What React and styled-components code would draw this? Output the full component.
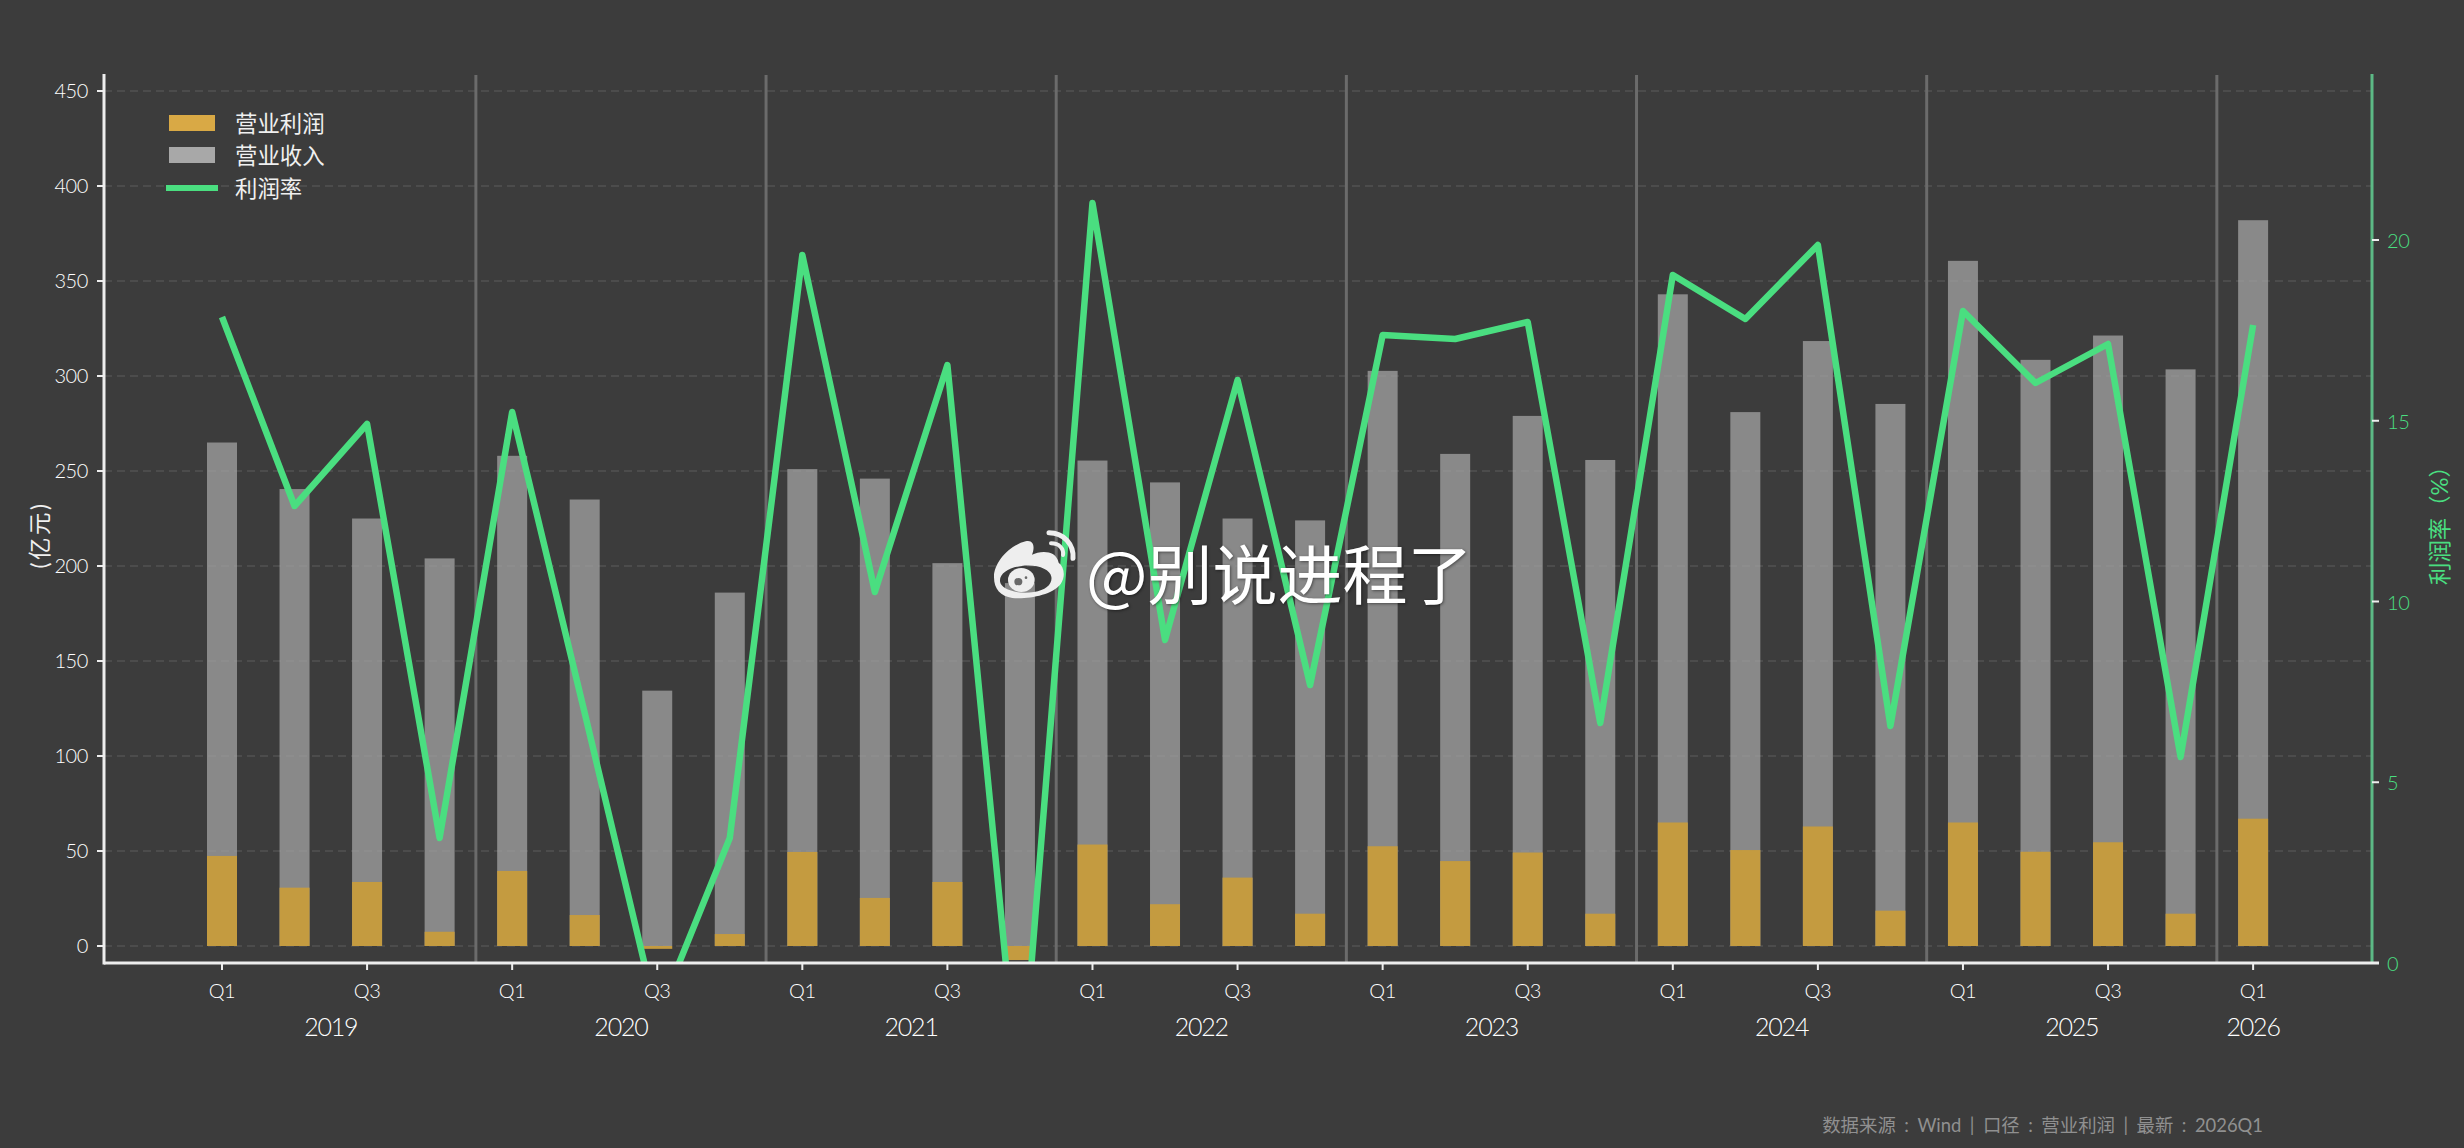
import React from "react";
import styled, { createGlobalStyle } from "styled-components";

const GlobalStyle = createGlobalStyle`
  html, body { margin: 0; padding: 0; background: #3c3c3c; overflow: hidden; }
  #root { width: 2464px; height: 1148px; }
`;

const FONT = `"Lato", "Noto Sans CJK SC", sans-serif`;

const Page = styled.main`
  width: 2464px;
  height: 1148px;
  display: flex;
  flex-direction: column;
  background: #3c3c3c;
  font-family: ${FONT};
`;
const ChartArea = styled.section`
  position: relative;
  flex: 1;
`;
const ChartSvg = styled.svg`
  display: block;
  width: 2464px;
  height: 1100px;
`;
const Footer = styled.footer`
  height: 48px;
  display: flex;
  align-items: center;
  justify-content: flex-end;
  padding-right: 201px;
  color: #909090;
  font-size: 18.4px;
  font-weight: 400;
  word-spacing: 3.8px;
  white-space: pre;
`;
const Legend = styled.div`
  position: absolute;
  left: 166px;
  top: 107px;
  display: flex;
  flex-direction: column;
  color: #f0f0f0;
  font-size: 22.4px;
  font-weight: 400;
`;
const LegendRow = styled.div`
  height: 32px;
  line-height: 32px;
  display: flex;
  align-items: center;
  gap: 17px;
  &:last-child {
    margin-top: 1px;
  }
`;
const LegendText = styled.span`
  padding-top: 2px;
`;
const SwatchBox = styled.span`
  width: 52px;
  display: flex;
  justify-content: center;
`;
const BarSwatch = styled.span`
  width: 46px;
  height: 16px;
  background: ${(p) => p.$color};
`;
const LineSwatch = styled.span`
  width: 52px;
  height: 6px;
  background: #4ade80;
`;
const Watermark = styled.div`
  position: absolute;
  left: 992px;
  top: 529px;
  display: flex;
  align-items: center;
  gap: 7px;
  color: #fff;
  font-family: "Noto Sans CJK SC", sans-serif;
  font-size: 65px;
  line-height: 85px;
  text-shadow: 1px 1px 3px rgba(0, 0, 0, 0.45);
  white-space: nowrap;
`;
const LogoSvg = styled.svg`
  width: 87px;
  height: 85px;
  flex: none;
`;
const TickLabel = styled.text`
  font-family: ${FONT};
  font-size: 20px;
  font-weight: 300;
  letter-spacing: -0.4px;
  fill: ${(p) => p.$color || "#ffffff"};
  text-anchor: ${(p) => p.$anchor || "middle"};
  dominant-baseline: central;
`;
const YearLabel = styled.text`
  font-family: ${FONT};
  font-size: 25px;
  font-weight: 300;
  letter-spacing: -1.2px;
  fill: #ffffff;
  text-anchor: middle;
  dominant-baseline: central;
`;
const AxisTitle = styled.text`
  font-family: ${FONT};
  font-size: 22.4px;
  font-weight: 400;
  letter-spacing: ${(p) => p.$spacing || "0"};
  fill: ${(p) => p.$color};
  text-anchor: middle;
  dominant-baseline: central;
`;
const GridLine = styled.line`
  stroke: #525252;
  stroke-width: 1.5;
  stroke-dasharray: 8 5;
`;
const YearDivider = styled.line`
  stroke: #6b6b6b;
  stroke-width: 3;
`;
const AxisLine = styled.line`
  stroke: ${(p) => p.$color || "#eeeeee"};
  stroke-width: ${(p) => p.$w || 3};
`;
const RevenueBar = styled.rect`
  fill: #aaaaaa;
  fill-opacity: 0.7;
`;
const ProfitBar = styled.rect`
  fill: #c49b40;
`;
const MarginLine = styled.polyline`
  fill: none;
  stroke: #4ade80;
  stroke-width: 6.5;
  stroke-linejoin: round;
  stroke-linecap: butt;
`;

const revenue = [265, 240.5, 225, 204, 258, 235, 134.4, 186, 251, 246, 201.5, 191, 255.5, 244, 225, 224, 302.7, 259, 279, 255.8, 343, 281, 318.4, 285.3, 360.6, 308.5, 321.3, 303.5, 382];
const profit = [47.4, 30.7, 33.7, 7.5, 39.5, 16.3, -1.5, 6.3, 49.5, 25.3, 33.7, -7.4, 53.4, 22, 36, 17, 52.5, 44.7, 49.2, 17, 65, 50.5, 62.9, 18.6, 65, 49.6, 54.6, 17, 67];
const marginY = [317, 506, 424, 838, 412, 713, 1017, 838, 255, 592, 365, 1108, 203, 640, 380, 685, 335, 339, 322, 723, 275, 319, 245, 726, 311, 383, 344, 757, 325];

const LEFT = 104, RIGHT = 2372, TOP = 74, BOTTOM = 963;
const qx = (i) => 222 + 72.54 * i;
const vy = (v) => 946 - 1.9 * v;
const ry = (v) => 963 - 36.15 * v;
const BAR = 30;

const leftTicks = [0, 50, 100, 150, 200, 250, 300, 350, 400, 450];
const rightTicks = [0, 5, 10, 15, 20];
const years = [2019, 2020, 2021, 2022, 2023, 2024, 2025];

function WeiboLogo() {
  return (
    <LogoSvg viewBox="24 25 261 255" aria-hidden="true">
      <path
        fillRule="evenodd"
        fill="#eeeeee"
        d="M30 170C28 130 70 76 125 62C152 56 152 84 144 102C168 90 216 86 224 126C240 138 246 166 230 190C204 224 132 236 85 232C50 228 30 205 30 170ZM48 182C50 206 100 222 150 214C186 208 206 190 202 168C198 146 160 130 112 136C76 140 46 158 48 182Z"
      />
      <ellipse cx="112" cy="178" rx="40" ry="36" fill="#eeeeee" />
      <ellipse cx="103" cy="183" rx="12" ry="11" fill="#6a6a6a" />
      <circle cx="126" cy="171" r="4" fill="#6a6a6a" />
      <path d="M195 36C240 36 270 72 267 113" fill="none" stroke="#eeeeee" strokeWidth="15" strokeLinecap="round" />
      <path d="M201 68C226 68 240 84 237 103" fill="none" stroke="#eeeeee" strokeWidth="12" strokeLinecap="round" />
    </LogoSvg>
  );
}

export default function App() {
  return (
    <Page>
      <GlobalStyle />
      <ChartArea>
        <ChartSvg viewBox="0 0 2464 1100">
          <defs>
            <clipPath id="plot">
              <rect x={LEFT} y={TOP} width={RIGHT - LEFT} height={BOTTOM - TOP} />
            </clipPath>
          </defs>

          {leftTicks.map((t) => (
            <GridLine key={t} x1={LEFT} x2={RIGHT} y1={vy(t)} y2={vy(t)} />
          ))}

          {revenue.map((v, i) => (
            <RevenueBar key={i} x={qx(i) - BAR / 2} y={vy(v)} width={BAR} height={vy(0) - vy(v)} />
          ))}
          {profit.map((v, i) => (
            <ProfitBar key={i} x={qx(i) - BAR / 2} y={Math.min(vy(v), vy(0))} width={BAR} height={Math.abs(vy(0) - vy(v))} />
          ))}

          {[3.5, 7.5, 11.5, 15.5, 19.5, 23.5, 27.5].map((p) => (
            <YearDivider key={p} x1={qx(p)} x2={qx(p)} y1={75} y2={BOTTOM} />
          ))}

          <g clipPath="url(#plot)">
            <MarginLine points={marginY.map((y, i) => `${qx(i)},${y}`).join(" ")} />
          </g>

          <AxisLine x1={LEFT} x2={LEFT} y1={TOP} y2={BOTTOM + 1.5} />
          <AxisLine $color="#5cb985" x1={RIGHT} x2={RIGHT} y1={TOP} y2={BOTTOM} />
          <AxisLine x1={LEFT} x2={RIGHT + 7} y1={BOTTOM} y2={BOTTOM} />

          {leftTicks.map((t) => (
            <g key={t}>
              <AxisLine $w={2} x1={97} x2={LEFT} y1={vy(t)} y2={vy(t)} />
              <TickLabel $anchor="end" x={88} y={vy(t) - 1}>{t}</TickLabel>
            </g>
          ))}
          {rightTicks.map((t) => (
            <g key={t}>
              <AxisLine $w={2} x1={RIGHT} x2={RIGHT + 7} y1={ry(t)} y2={ry(t)} />
              <TickLabel $anchor="start" $color="#4ade80" x={2387} y={ry(t)}>{t}</TickLabel>
            </g>
          ))}

          {revenue.map((_, i) =>
            i % 2 === 0 ? (
              <g key={i}>
                <AxisLine $w={2} x1={qx(i)} x2={qx(i)} y1={BOTTOM} y2={BOTTOM + 7} />
                <TickLabel x={qx(i)} y={990}>{i % 4 === 0 ? "Q1" : "Q3"}</TickLabel>
              </g>
            ) : null
          )}

          {years.map((y, k) => (
            <YearLabel key={y} x={qx(1.5 + 4 * k)} y={1026}>{y}</YearLabel>
          ))}
          <YearLabel x={qx(28)} y={1026}>2026</YearLabel>

          <AxisTitle $color="#f0f0f0" $spacing="2.5px" x={39} y={535} transform="rotate(-90 39 535)">(亿元)</AxisTitle>
          <AxisTitle $color="#4ade80" x={2439} y={520} transform="rotate(-90 2439 520)">利润率（%）</AxisTitle>
        </ChartSvg>

        <Legend>
          <LegendRow>
            <SwatchBox><BarSwatch $color="#d9a945" /></SwatchBox>
            <LegendText>营业利润</LegendText>
          </LegendRow>
          <LegendRow>
            <SwatchBox><BarSwatch $color="#a8a8a8" /></SwatchBox>
            <LegendText>营业收入</LegendText>
          </LegendRow>
          <LegendRow>
            <SwatchBox><LineSwatch /></SwatchBox>
            <LegendText>利润率</LegendText>
          </LegendRow>
        </Legend>

        <Watermark>
          <WeiboLogo />
          <span>@别说进程了</span>
        </Watermark>
      </ChartArea>
      <Footer>数据来源 : Wind | 口径 : 营业利润 | 最新 : 2026Q1</Footer>
    </Page>
  );
}
